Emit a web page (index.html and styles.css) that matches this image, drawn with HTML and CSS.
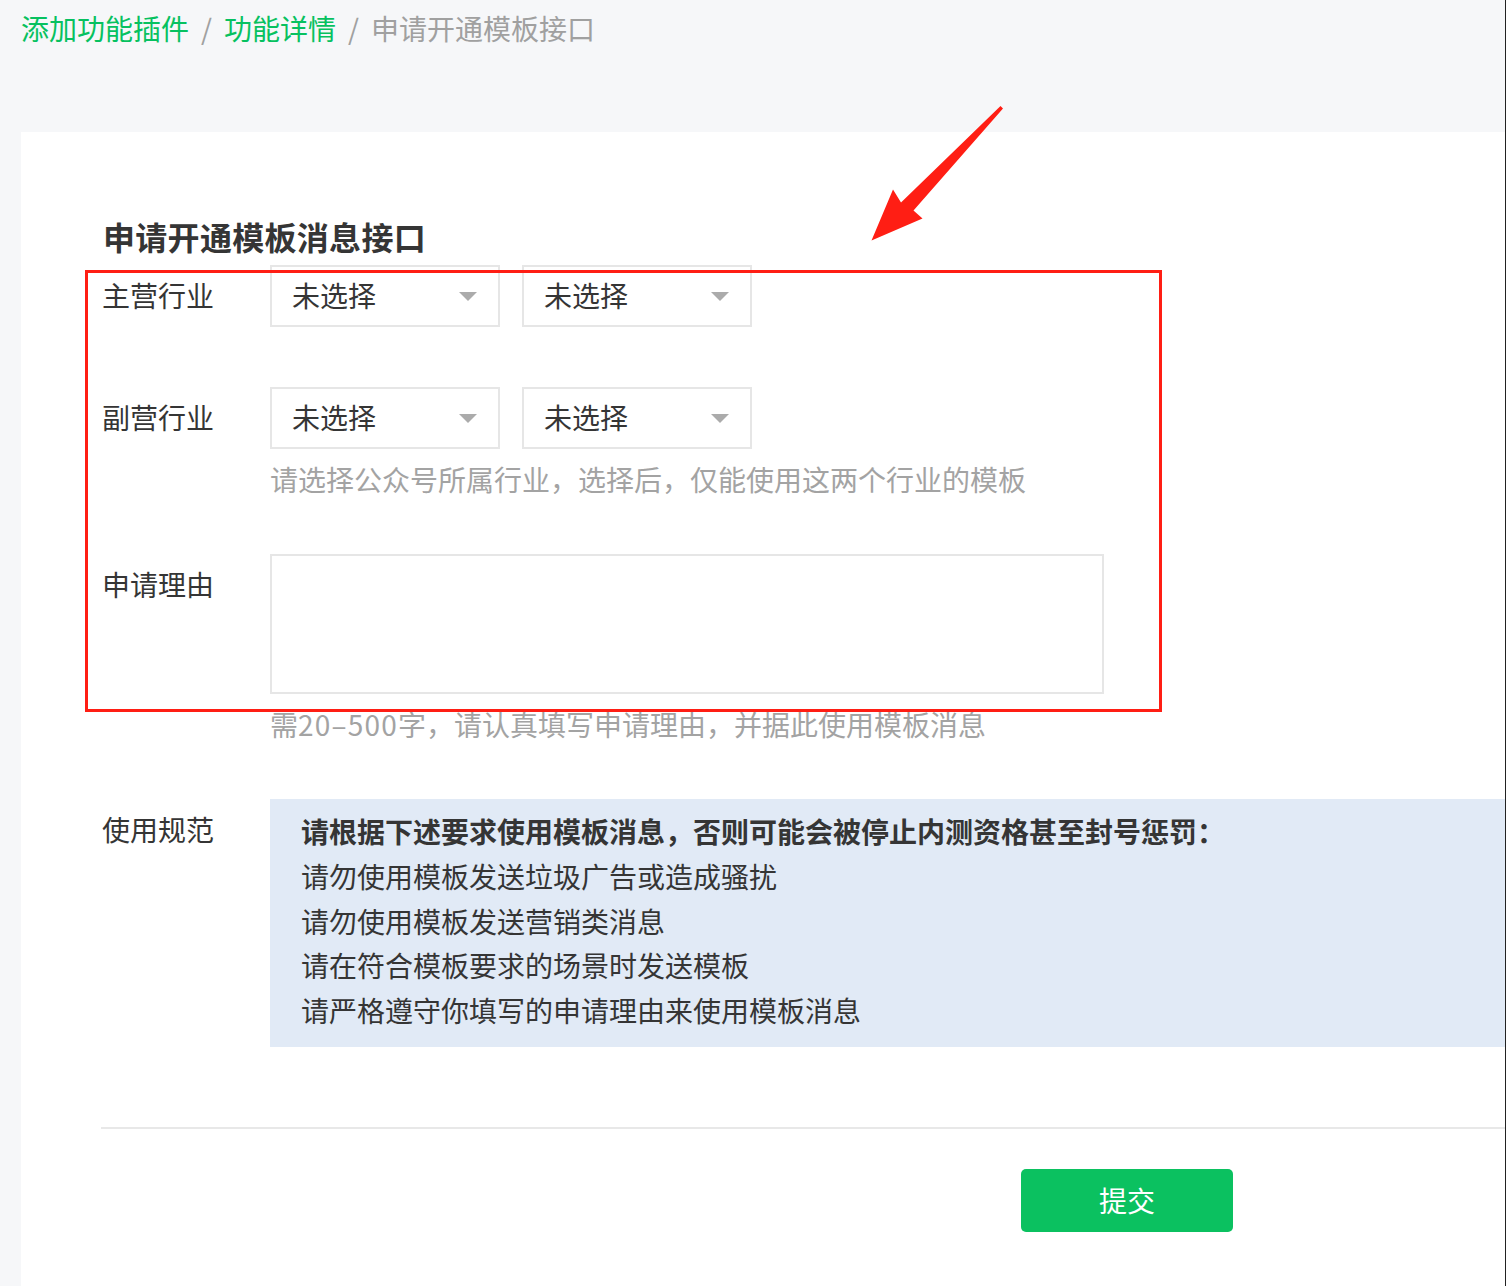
FILE: index.html
```html
<!DOCTYPE html>
<html lang="zh-CN">
<head>
<meta charset="utf-8">
<title>申请开通模板消息接口</title>
<link rel="stylesheet" href="styles.css">
</head>
<body>
<div class="page">
  <nav class="crumbs">
    <a class="crumb-link">添加功能插件</a><span class="sep">/</span><a class="crumb-link">功能详情</a><span class="sep">/</span><span class="crumb-current">申请开通模板接口</span>
  </nav>

  <main class="card">
    <h2 class="title">申请开通模板消息接口</h2>

    <div class="row row-first">
      <div class="label">主营行业</div>
      <div class="field">
        <div class="selects">
          <div class="select"><span class="select-text">未选择</span><i class="caret"></i></div>
          <div class="select"><span class="select-text">未选择</span><i class="caret"></i></div>
        </div>
      </div>
    </div>

    <div class="row">
      <div class="label">副营行业</div>
      <div class="field">
        <div class="selects">
          <div class="select"><span class="select-text">未选择</span><i class="caret"></i></div>
          <div class="select"><span class="select-text">未选择</span><i class="caret"></i></div>
        </div>
        <p class="tips">请选择公众号所属行业，选择后，仅能使用这两个行业的模板</p>
      </div>
    </div>

    <div class="row">
      <div class="label">申请理由</div>
      <div class="field">
        <textarea class="reason"></textarea>
        <p class="tips">需<span class="num">20–500</span>字，请认真填写申请理由，并据此使用模板消息</p>
      </div>
    </div>

    <div class="row row-last">
      <div class="label">使用规范</div>
      <div class="field">
        <div class="notice">
          <p class="notice-title">请根据下述要求使用模板消息，否则可能会被停止内测资格甚至封号惩罚：</p>
          <p class="notice-line">请勿使用模板发送垃圾广告或造成骚扰</p>
          <p class="notice-line">请勿使用模板发送营销类消息</p>
          <p class="notice-line">请在符合模板要求的场景时发送模板</p>
          <p class="notice-line">请严格遵守你填写的申请理由来使用模板消息</p>
        </div>
      </div>
    </div>

    <div class="divider"></div>

    <div class="actions">
      <button class="btn-primary" type="button">提交</button>
    </div>
  </main>

  <svg class="annotation" width="1506" height="1286" viewBox="0 0 1506 1286" aria-hidden="true">
    <rect x="86.5" y="271.5" width="1074" height="439" fill="none" stroke="#ff1e14" stroke-width="3"/>
    <polygon points="1000.5,106 1003,108.5 913.5,210.5 922.5,218.5 871.5,240.5 893,189.5 901,202.5" fill="#ff1e14"/>
  </svg>
</div>
</body>
</html>
```

FILE: styles.css
```css
* {
  box-sizing: border-box;
}

html, body {
  margin: 0;
  padding: 0;
}

body {
  background: #f6f7f9;
  font-family: "Noto Sans CJK SC", "Noto Sans", sans-serif;
  color: #353535;
}

.page {
  position: relative;
  width: 1506px;
  min-height: 1286px;
  display: flex;
  flex-direction: column;
  border-right: 1px solid #222;
  border-bottom: 1px solid #222;
}

.crumbs {
  padding: 8px 0 0 21px;
  height: 50px;
  font-size: 28px;
  line-height: 40px;
  white-space: nowrap;
}

.crumb-link {
  color: #07c160;
  text-decoration: none;
}

.sep {
  color: #a0a0a0;
  margin: 0 12px;
}

.crumb-current {
  color: #a0a0a0;
}

.card {
  flex: 1;
  margin: 82px 0 0 21px;
  background: #fff;
  padding: 82px 0 54px 81px;
}

.title {
  margin: 0 0 7px 1px;
  font-size: 32px;
  line-height: 44px;
  font-weight: 700;
  letter-spacing: 0.3px;
  color: #353535;
}

.row {
  display: grid;
  grid-template-columns: 168px 1fr;
  margin-bottom: 55px;
}

.row-first {
  margin-bottom: 60px;
}

.row-last {
  margin-bottom: 0;
}

.label {
  font-size: 28px;
  line-height: 60px;
  color: #353535;
}

.field {
  min-width: 0;
}

.selects {
  display: flex;
  gap: 22px;
}

.select {
  width: 230px;
  height: 62px;
  border: 2px solid #e6e6e6;
  display: flex;
  align-items: center;
  justify-content: space-between;
  padding: 0 21px 2px 20px;
  background: #fff;
}

.select-text {
  font-size: 28px;
  line-height: 56px;
  color: #353535;
}

.caret {
  width: 0;
  height: 0;
  margin-top: 2px;
  border-left: 9px solid transparent;
  border-right: 9px solid transparent;
  border-top: 9px solid #ababab;
}

.tips {
  margin: 10px 0 0;
  font-size: 28px;
  line-height: 40px;
  color: #a3a3a3;
  white-space: nowrap;
}

.num {
  letter-spacing: 1.2px;
}

.reason {
  display: block;
  width: 834px;
  height: 140px;
  border: 2px solid #e6e6e6;
  border-radius: 0;
  resize: none;
  outline: none;
  margin: 0;
  padding: 10px 20px;
  font-family: inherit;
  font-size: 28px;
  background: #fff;
}

.notice {
  background: #e1eaf6;
  padding: 10px 20px 14px 31px;
}

.notice p {
  margin: 0;
  font-size: 28px;
  line-height: 44.75px;
  color: #353535;
  white-space: nowrap;
}

.notice .notice-title {
  font-weight: 700;
}

.divider {
  height: 2px;
  background: #e8e8e8;
  margin: 80px 0 0 -1px;
}

.actions {
  padding: 40px 0 0 919px;
}

.btn-primary {
  width: 212px;
  height: 63px;
  border: 0;
  border-radius: 5px;
  background: #0bc160;
  color: #fff;
  font-family: inherit;
  font-size: 28px;
  line-height: 60px;
  padding: 0;
  cursor: pointer;
}

.annotation {
  position: absolute;
  left: 0;
  top: 0;
  pointer-events: none;
}
```
